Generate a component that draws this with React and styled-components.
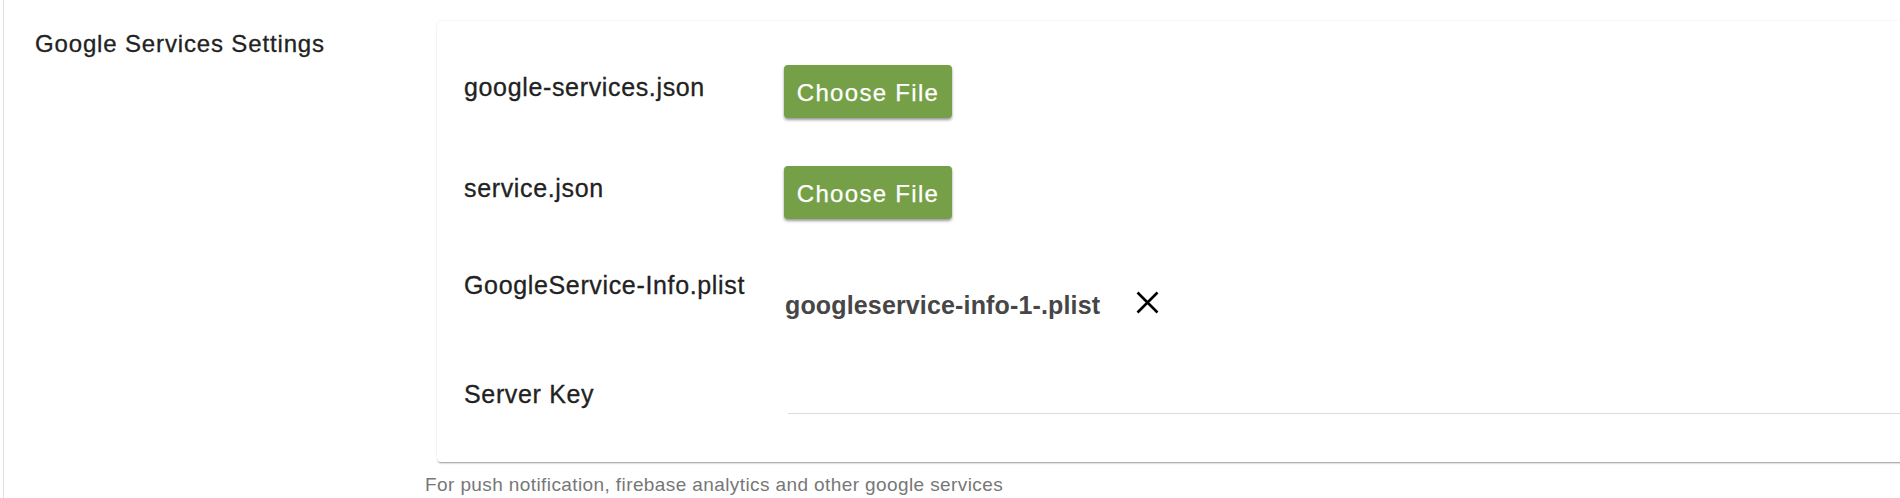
import React from 'react';
import styled, { createGlobalStyle } from 'styled-components';

const Global = createGlobalStyle`
  html, body { margin: 0; padding: 0; background: #ffffff; overflow: hidden; }
  body { font-family: "Liberation Sans", Arial, Helvetica, sans-serif; }
`;

const Page = styled.div`
  margin-left: 3px;
  border-left: 1px solid #e2e2e2;
  height: 498px;
  display: flex;
  align-items: flex-start;
  box-sizing: border-box;
`;

const SideColumn = styled.div`
  width: 433px;
  flex: none;
  box-sizing: border-box;
  padding: 29px 0 0 31px;
`;

const Heading = styled.h2`
  margin: 0;
  font-size: 24px;
  line-height: 30px;
  font-weight: 400;
  color: #222222;
  letter-spacing: 0.85px;
  -webkit-text-stroke: 0.3px #222222;
  white-space: nowrap;
`;

const Main = styled.div`
  flex: 1;
  min-width: 0;
  margin-right: -12px;
  padding-top: 21px;
`;

const Card = styled.div`
  background: #ffffff;
  border-radius: 4px;
  box-shadow: 0 2px 2px -1px rgba(0, 0, 0, 0.4), 0 0 2px rgba(0, 0, 0, 0.1);
  padding: 44px 0 48px 27px;
`;

const Row = styled.div`
  display: flex;
  align-items: flex-start;
  height: ${(p) => p.$h}px;
`;

const Label = styled.div`
  width: 320px;
  flex: none;
  padding-top: 7px;
  font-size: 25px;
  line-height: 30px;
  color: #222222;
  letter-spacing: 0.65px;
  -webkit-text-stroke: 0.3px #222222;
  white-space: nowrap;
`;

const Control = styled.div`
  flex: 1;
  min-width: 0;
  display: flex;
  align-items: flex-start;
  padding-top: ${(p) => p.$offset || 0}px;
`;

const FileButton = styled.button`
  width: 168px;
  height: 53px;
  box-sizing: border-box;
  padding: 2px 0 0;
  border: none;
  border-radius: 4px;
  background: #76a048;
  color: #ffffff;
  font-family: "Liberation Sans", Arial, Helvetica, sans-serif;
  font-size: 24px;
  letter-spacing: 1.3px;
  -webkit-text-stroke: 0.25px #ffffff;
  box-shadow: 0 2px 3px rgba(0, 0, 0, 0.4);
  display: inline-flex;
  align-items: center;
  justify-content: center;
  cursor: pointer;
`;

const FileName = styled.span`
  margin-left: 1px;
  font-size: 25px;
  line-height: 30px;
  font-weight: 700;
  color: #464646;
  letter-spacing: 0.15px;
  white-space: nowrap;
`;

const RemoveButton = styled.button`
  margin: 1px 0 0 36px;
  padding: 0;
  border: none;
  background: transparent;
  width: 23px;
  height: 23px;
  display: flex;
  cursor: pointer;
`;

const KeyInput = styled.input`
  flex: 1;
  min-width: 0;
  margin-left: 4px;
  height: 42px;
  box-sizing: border-box;
  border: none;
  border-bottom: 1px solid #dcdcdc;
  background: transparent;
  outline: none;
  font-family: "Liberation Sans", Arial, Helvetica, sans-serif;
  font-size: 22px;
`;

const HelpText = styled.p`
  margin: 11px 0 0 -12px;
  font-size: 19px;
  line-height: 24px;
  color: #777777;
  letter-spacing: 0.4px;
  white-space: nowrap;
`;

const CloseIcon = () => (
  <svg width="23" height="23" viewBox="0 0 23 23" aria-hidden="true">
    <path d="M1.5 1.5 L21.5 21.5 M21.5 1.5 L1.5 21.5" stroke="#000" strokeWidth="2.6" fill="none" />
  </svg>
);

export default function App() {
  return (
    <>
      <Global />
      <Page>
        <SideColumn>
          <Heading>Google Services Settings</Heading>
        </SideColumn>
        <Main>
          <Card>
            <Row $h={101}>
              <Label>google-services.json</Label>
              <Control>
                <FileButton type="button">Choose File</FileButton>
              </Control>
            </Row>
            <Row $h={97}>
              <Label>service.json</Label>
              <Control>
                <FileButton type="button">Choose File</FileButton>
              </Control>
            </Row>
            <Row $h={109}>
              <Label>GoogleService-Info.plist</Label>
              <Control $offset={27}>
                <FileName>googleservice-info-1-.plist</FileName>
                <RemoveButton type="button" aria-label="Remove file">
                  <CloseIcon />
                </RemoveButton>
              </Control>
            </Row>
            <Row $h={42}>
              <Label>Server Key</Label>
              <Control>
                <KeyInput type="text" aria-label="Server Key" />
              </Control>
            </Row>
          </Card>
          <HelpText>For push notification, firebase analytics and other google services</HelpText>
        </Main>
      </Page>
    </>
  );
}
